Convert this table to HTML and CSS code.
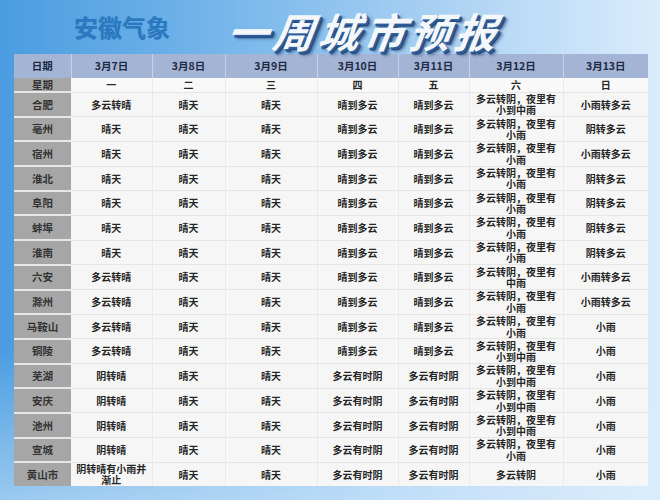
FILE: index.html
```html
<!DOCTYPE html>
<html lang="zh-CN">
<head>
<meta charset="utf-8">
<title>安徽气象 一周城市预报</title>
<link rel="stylesheet" href="styles.css">
</head>
<body>
<header class="banner">
  <span class="brand">安徽气象</span>
  <h1 class="title">一周城市预报</h1>
</header>
<table class="forecast">
  <colgroup>
    <col class="c-city"><col class="c1"><col class="c2"><col class="c3"><col class="c4"><col class="c5"><col class="c6"><col class="c7">
  </colgroup>
  <thead>
    <tr class="dates"><th>日期</th><th>3月7日</th><th>3月8日</th><th>3月9日</th><th>3月10日</th><th>3月11日</th><th>3月12日</th><th>3月13日</th></tr>
  </thead>
  <tbody>
    <tr class="week"><th>星期</th><td>一</td><td>二</td><td>三</td><td>四</td><td>五</td><td>六</td><td>日</td></tr>
    <tr><th>合肥</th><td>多云转晴</td><td>晴天</td><td>晴天</td><td>晴到多云</td><td>晴到多云</td><td>多云转阴，夜里有<br>小到中雨</td><td>小雨转多云</td></tr>
    <tr><th>亳州</th><td>晴天</td><td>晴天</td><td>晴天</td><td>晴到多云</td><td>晴到多云</td><td>多云转阴，夜里有<br>小雨</td><td>阴转多云</td></tr>
    <tr><th>宿州</th><td>晴天</td><td>晴天</td><td>晴天</td><td>晴到多云</td><td>晴到多云</td><td>多云转阴，夜里有<br>小雨</td><td>小雨转多云</td></tr>
    <tr><th>淮北</th><td>晴天</td><td>晴天</td><td>晴天</td><td>晴到多云</td><td>晴到多云</td><td>多云转阴，夜里有<br>小雨</td><td>阴转多云</td></tr>
    <tr><th>阜阳</th><td>晴天</td><td>晴天</td><td>晴天</td><td>晴到多云</td><td>晴到多云</td><td>多云转阴，夜里有<br>小雨</td><td>阴转多云</td></tr>
    <tr><th>蚌埠</th><td>晴天</td><td>晴天</td><td>晴天</td><td>晴到多云</td><td>晴到多云</td><td>多云转阴，夜里有<br>小雨</td><td>阴转多云</td></tr>
    <tr><th>淮南</th><td>晴天</td><td>晴天</td><td>晴天</td><td>晴到多云</td><td>晴到多云</td><td>多云转阴，夜里有<br>小雨</td><td>阴转多云</td></tr>
    <tr><th>六安</th><td>多云转晴</td><td>晴天</td><td>晴天</td><td>晴到多云</td><td>晴到多云</td><td>多云转阴，夜里有<br>中雨</td><td>小雨转多云</td></tr>
    <tr><th>滁州</th><td>多云转晴</td><td>晴天</td><td>晴天</td><td>晴到多云</td><td>晴到多云</td><td>多云转阴，夜里有<br>小雨</td><td>小雨转多云</td></tr>
    <tr><th>马鞍山</th><td>多云转晴</td><td>晴天</td><td>晴天</td><td>晴到多云</td><td>晴到多云</td><td>多云转阴，夜里有<br>小雨</td><td>小雨</td></tr>
    <tr><th>铜陵</th><td>多云转晴</td><td>晴天</td><td>晴天</td><td>晴到多云</td><td>晴到多云</td><td>多云转阴，夜里有<br>小到中雨</td><td>小雨</td></tr>
    <tr><th>芜湖</th><td>阴转晴</td><td>晴天</td><td>晴天</td><td>多云有时阴</td><td>多云有时阴</td><td>多云转阴，夜里有<br>小到中雨</td><td>小雨</td></tr>
    <tr><th>安庆</th><td>阴转晴</td><td>晴天</td><td>晴天</td><td>多云有时阴</td><td>多云有时阴</td><td>多云转阴，夜里有<br>小到中雨</td><td>小雨</td></tr>
    <tr><th>池州</th><td>阴转晴</td><td>晴天</td><td>晴天</td><td>多云有时阴</td><td>多云有时阴</td><td>多云转阴，夜里有<br>小到中雨</td><td>小雨</td></tr>
    <tr><th>宣城</th><td>阴转晴</td><td>晴天</td><td>晴天</td><td>多云有时阴</td><td>多云有时阴</td><td>多云转阴，夜里有<br>小雨</td><td>小雨</td></tr>
    <tr><th>黄山市</th><td>阴转晴有小雨并<br>渐止</td><td>晴天</td><td>晴天</td><td>多云有时阴</td><td>多云有时阴</td><td>多云转阴</td><td>小雨</td></tr>
  </tbody>
</table>
</body>
</html>
```
FILE: styles.css
```css
html, body {
  margin: 0;
  padding: 0;
}
body {
  width: 660px;
  height: 500px;
  overflow: hidden;
  font-family: "Noto Sans CJK SC", "Noto Sans", sans-serif;
  background:
    linear-gradient(to bottom, rgba(255,255,255,0) 0%, rgba(255,255,255,0) 70%, rgba(220,238,252,0.55) 100%),
    linear-gradient(to right, #4a9de0 0%, #6aafe8 25%, #8fc3ee 50%, #b7d8f5 75%, #d9ecfb 100%);
}
.banner {
  height: 54px;
  display: flex;
  align-items: center;
}
.brand {
  margin-left: 74px;
  font-size: 24px;
  line-height: 30px;
  font-weight: 700;
  color: #2a78bf;
  text-shadow: 0 0 1px rgba(20,80,150,0.4);
  margin-top: -1px;
}
.title {
  align-self: flex-start;
  margin: 0 0 0 58px;
  padding: 0 14px 0 0;
  font-size: 41px;
  line-height: 60px;
  font-weight: 700;
  font-style: italic;
  color: #f4f8fc;
  letter-spacing: 4.5px;
  transform: skewX(-8deg);
  text-shadow: 2px 2px 0 #2d5d9a, 3px 3px 1px #1c3f75, 5px 4px 3px rgba(20,50,100,0.5);
}
.forecast {
  margin-left: 14px;
  width: 634px;
  table-layout: fixed;
  border-collapse: collapse;
  font-size: 10px;
  line-height: 11.5px;
  color: #262626;
  font-weight: 700;
}
.c-city { width: 57px; }
.c1 { width: 81px; }
.c2 { width: 73px; }
.c3 { width: 92px; }
.c4 { width: 81px; }
.c5 { width: 71px; }
.c6 { width: 94px; }
.c7 { width: 85px; }
.forecast th, .forecast td {
  padding: 0;
  text-align: center;
  vertical-align: middle;
  white-space: nowrap;
}
.dates th {
  height: 24px;
  font-size: 10.5px;
  background: #a3b4d5;
  color: #1f2a44;
  border-right: 1px solid #c6d2e8;
}
.dates th:last-child { border-right: none; }
tbody th, tbody td {
  height: 22.7px;
}
tbody th { font-size: 10.5px; }
.week th, .week td {
  height: 13px;
  line-height: 12px;
}
tbody th {
  background: #a6a6a6;
  color: #333;
  border-bottom: 2px solid #e6e6e6;
  font-weight: 700;
}
tbody td {
  background: #f6f6f6;
  border-bottom: 1px solid #e6e6e6;
  border-right: 1px solid #ebebeb;
}
tbody td:last-child { border-right: none; }
tbody tr:last-child th, tbody tr:last-child td { border-bottom: none; }
.week td { background: #f9f9f9; }
```
